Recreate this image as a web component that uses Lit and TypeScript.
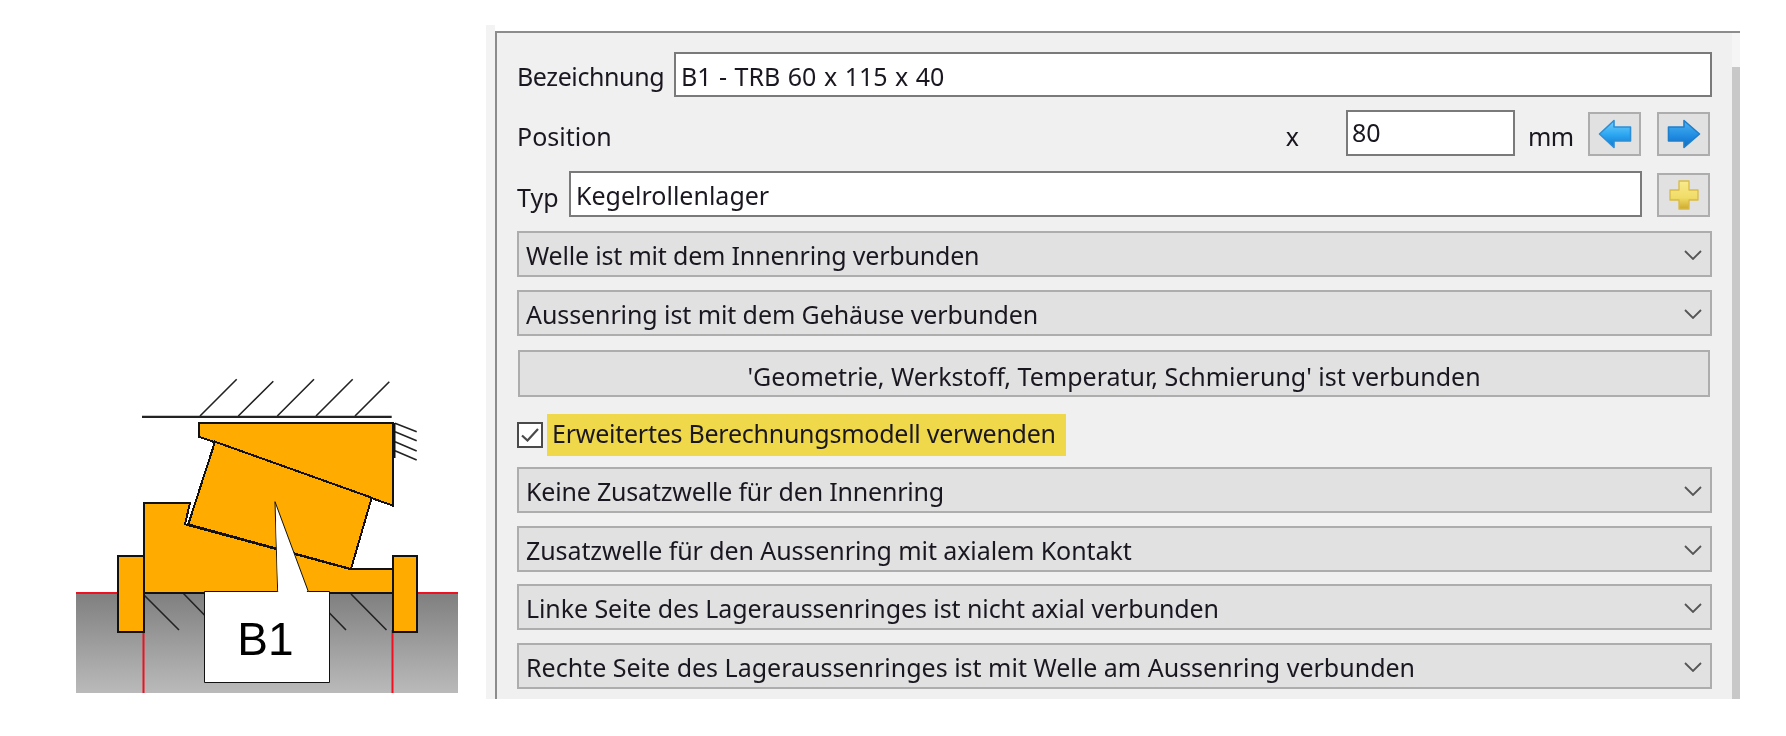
import { LitElement, html, css, svg } from "lit";
import { customElement } from "lit/decorators.js";

const chevron = html`<svg class="chev" viewBox="0 0 18 10" width="18" height="10"><path d="M1 1 L9 9 L17 1" fill="none" stroke="#555" stroke-width="1.8"/></svg>`;

const iconDefs = svg`<defs>
<linearGradient id="ag" x1="0" y1="0" x2="0" y2="1"><stop offset="0" stop-color="#6fd2ff"/><stop offset=".55" stop-color="#2aa4f0"/><stop offset="1" stop-color="#0f78cf"/></linearGradient>
<linearGradient id="ag2" x1="0" y1="0" x2="0" y2="1"><stop offset="0" stop-color="#4cb4f5"/><stop offset=".6" stop-color="#1f8ae0"/><stop offset="1" stop-color="#0e6cc0"/></linearGradient>
<linearGradient id="pg" x1="0" y1="0" x2="0" y2="1"><stop offset="0" stop-color="#f8ea8e"/><stop offset=".6" stop-color="#f0dc66"/><stop offset="1" stop-color="#cfa92e"/></linearGradient></defs>`;

const arrowL = html`<svg width="34" height="30" viewBox="0 0 34 30">${iconDefs}<path d="M1.5 15 L16 1.5 V8 H32.5 V22 H16 V28.5 Z" fill="url(#ag)" stroke="#2d8ed6" stroke-width="1.6" stroke-linejoin="round"/></svg>`;
const arrowR = html`<svg width="34" height="30" viewBox="0 0 34 30">${iconDefs}<path d="M32.5 15 L17 1.5 V8 H1.5 V22 H17 V28.5 Z" fill="url(#ag2)" stroke="#1f7fca" stroke-width="1.6" stroke-linejoin="round"/></svg>`;
const plus = html`<svg width="30" height="30" viewBox="0 0 30 30">${iconDefs}<path d="M10 1 H20 V10 H29 V20 H20 V29 H10 V20 H1 V10 H10 Z" fill="url(#pg)" stroke="#d8bb45" stroke-width="1.3" stroke-linejoin="round"/></svg>`;

const diagram = svg`
  <defs><linearGradient id="gr" x1="0" y1="0" x2="0" y2="1"><stop offset="0" stop-color="#7f7f7f"/><stop offset="1" stop-color="#bababa"/></linearGradient></defs>
  <rect x="76" y="593" width="382" height="100" fill="url(#gr)"/>
  <g stroke="#f01020" stroke-width="2" fill="none">
    <path d="M76 593 H118 M416 593 H458 M143.5 630 V693 M392.5 630 V693"/>
  </g>
  <g stroke="#222" stroke-width="1.6" fill="none">
    <path d="M144 595 L179 630 M183 593 L217 628 M310 593 L346 630 M351 594 L386.5 630"/>
    <path d="M200 416 L236.7 379.3 M238.3 416 L273.3 381.3 M277.3 416 L314 379.3 M316 416 L352.7 379.3 M355 416 L389.3 381.7"/>
    <path d="M395 423.3 L416.7 431.7 M395 431.7 L416.7 440.7 M395 441.7 L416.7 451 M395 450.7 L416.7 460"/>
  </g>
  <path d="M142 416.8 H391.7" stroke="#222" stroke-width="2.2"/>
  <path d="M394 423 V458" stroke="#111" stroke-width="3"/>
  <g fill="#ffab00" stroke="#111" stroke-width="2" shape-rendering="crispEdges" stroke-linejoin="miter">
    <path d="M143.5 502.8 H190 L185 524.3 L351 569.3 H392.5 V592.5 H143.5 Z"/>
    <path d="M199 423.3 H392.5 V505.5 L199 436.7 Z"/>
    <path d="M215 441.7 L371.7 497.7 L351 569 L188.3 524.3 Z"/>
    <rect x="117.7" y="556" width="25.8" height="75.7"/>
    <rect x="392.5" y="556" width="24.2" height="75.7"/>
  </g>
  <path d="M277.7 591.5 L275 501.7 L308.3 591.5" fill="#fff" stroke="#111" stroke-width="1"/>
  <path d="M204.5 591.5 H277.7 L308.3 591.5 H329.5 V682.5 H204.5 Z" fill="#fff" stroke="#111" stroke-width="1"/>
  <path d="M278.2 592.5 L276 520 L307.4 592.5 Z" fill="#fff"/>
  <text x="265.5" y="655" text-anchor="middle" font-family="Liberation Sans, sans-serif" font-size="46" fill="#000">B1</text>
`;

@customElement("app-root")
export class AppRoot extends LitElement {
  static styles = css`
    :host { display: block; width: 1786px; height: 736px; background: #fff; overflow: hidden;
      font-family: "Noto Sans", "Open Sans", sans-serif; font-size: 25px; color: #1b1720; }
    * { box-sizing: border-box; }
    .page { display: flex; width: 1786px; height: 736px; filter: blur(0.45px); }
    .canvas { flex: none; display: block; width: 486px; height: 736px; }
    .panel { flex: none; display: flex; width: 1254px; height: 674px; margin-top: 25px; }
    .strip { flex: none; width: 9px; height: 674px; background: #f3f3f3; }
    .main { flex: none; width: 1245px; height: 668px; margin-top: 6px; display: flex; background: #f0f0f0;
      border-top: 2px solid #8c8c8c; border-left: 2px solid #8c8c8c; }
    .content { flex: none; width: 1235px; padding: 19px 20px 0 20px; display: flex; flex-direction: column; }
    .scroll { flex: none; width: 8px; display: flex; flex-direction: column; background: #f5f5f5; }
    .thumb { margin-top: 34px; flex: 1; background: #c8c8c8; }
    .row { display: flex; align-items: center; flex: none; }
    .h45 { height: 45px; } .h46 { height: 46px; } .h47 { height: 47px; }
    .m11 { margin-top: 11px; } .m12 { margin-top: 12px; } .m13 { margin-top: 13px; } .m14 { margin-top: 14px; } .m15 { margin-top: 15px; } .m17 { margin-top: 17px; }
    .lbl { white-space: nowrap; }
    .tight { letter-spacing: -0.19px; }
    .snug { letter-spacing: -0.09px; }
    .bezl { flex: none; width: 144px; letter-spacing: -0.4px; padding-top: 2px; }
    .drop { padding-top: 5px; }
    .typl { flex: none; width: 41px; padding-top: 6px; }
    .field { height: 100%; background: #fff; border: 2px solid #7a7a7a; padding: 2px 5px 0 5px; display: flex; align-items: center; white-space: nowrap; }
    .grow { flex: 1; word-spacing: 1px; }
    .bez { margin-left: 13px; }
    .typ { margin-left: 11px; width: 1073px; flex: none; }
    .num { width: 169px; flex: none; margin-left: 47px; padding: 0 5px 3px 4px; }
    .x { margin-left: auto; }
    .mm { margin-left: 13px; width: 60px; flex: none; letter-spacing: -0.6px; }
    .btn { flex: none; width: 53px; height: 44px; align-self: flex-end; display: flex; align-items: center; justify-content: center;
      background: #e1e1e1; border: 2px solid #adadad; }
    .btn + .btn { margin-left: 16px; }
    .pad2 { padding-right: 2px; }
    .typbtn { margin-left: 15px; }
    .select { background: #e1e1e1; border: 2px solid #adadad; padding: 2px 9px 0 7px; justify-content: space-between; }
    .chev { margin-right: -1px; }
    .wide { margin-left: 1px; margin-right: 2px; justify-content: center; background: #e1e1e1; border: 2px solid #adadad; padding-top: 5px; }
    .check { flex: none; width: 26px; height: 26px; background: #fff; border: 2px solid #4a4a4a; display: flex; align-items: center; justify-content: center; }
    .yellow { margin-left: 4px; height: 42px; width: 519px; background: #efd94b; display: flex; align-items: center; padding: 0 0 5px 5px; white-space: nowrap; letter-spacing: -0.25px; }
  `;

  render() {
    return html`
      <div class="page">
        <svg class="canvas" viewBox="0 0 486 736">${diagram}</svg>
        <div class="panel">
          <div class="strip"></div>
          <div class="main">
            <div class="content">
              <div class="row h45">
                <span class="lbl bezl">Bezeichnung</span>
                <div class="field grow bez">B1 - TRB 60 x 115 x 40</div>
              </div>
              <div class="row h46 m13 pad2">
                <span class="lbl drop">Position</span>
                <span class="lbl x drop">x</span>
                <div class="field num">80</div>
                <span class="lbl mm drop">mm</span>
                <div class="btn">${arrowL}</div>
                <div class="btn">${arrowR}</div>
              </div>
              <div class="row h46 m15 pad2">
                <span class="lbl typl">Typ</span>
                <div class="field typ">Kegelrollenlager</div>
                <div class="btn typbtn">${plus}</div>
              </div>
              ${this.sel("Welle ist mit dem Innenring verbunden", "m14", "tight")}
              ${this.sel("Aussenring ist mit dem Gehäuse verbunden", "m13", "snug")}
              <div class="row h47 m14 wide">'Geometrie, Werkstoff, Temperatur, Schmierung' ist verbunden</div>
              <div class="row m17">
                <div class="check">
                  <svg width="18" height="14" viewBox="0 0 18 14"><path d="M1 7.5 L6.5 12.5 L17 1" fill="none" stroke="#4a4a4a" stroke-width="2.2"/></svg>
                </div>
                <div class="yellow">Erweitertes Berechnungsmodell verwenden</div>
              </div>
              ${this.sel("Keine Zusatzwelle für den Innenring", "m11", "tight")}
              ${this.sel("Zusatzwelle für den Aussenring mit axialem Kontakt", "m13", "snug")}
              ${this.sel("Linke Seite des Lageraussenringes ist nicht axial verbunden", "m12", "snug")}
              ${this.sel("Rechte Seite des Lageraussenringes ist mit Welle am Aussenring verbunden", "m13", "")}
            </div>
            <div class="scroll"><div class="thumb"></div></div>
          </div>
        </div>
      </div>
    `;
  }

  sel(text: string, gap: string, fit: string) {
    return html`<div class="row h46 select ${gap}"><span class="lbl ${fit}">${text}</span>${chevron}</div>`;
  }
}
